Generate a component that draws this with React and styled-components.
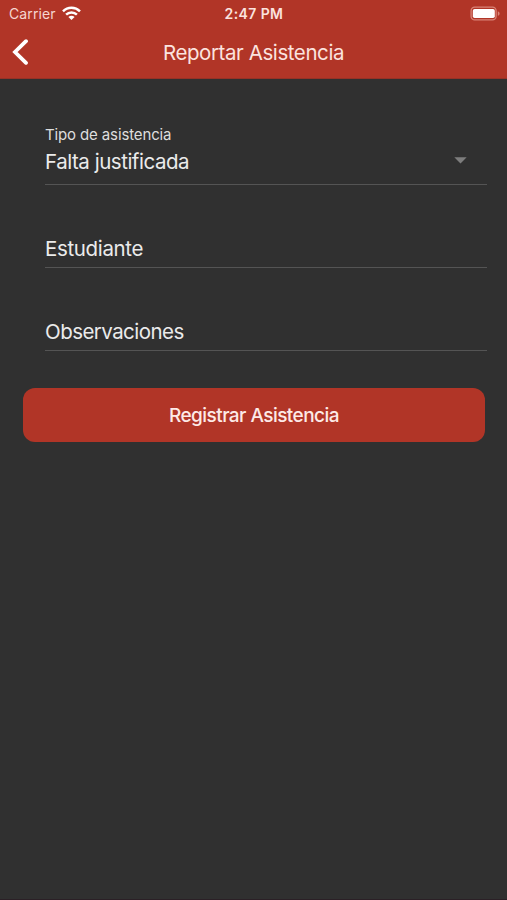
import { useState } from "react";
import styled, { createGlobalStyle } from "styled-components";

const GlobalStyle = createGlobalStyle`
  * {
    box-sizing: border-box;
  }
  body {
    margin: 0;
    background: #303030;
    font-family: Inter, "Liberation Sans", sans-serif;
  }
`;

const Screen = styled.div`
  width: 100%;
  height: 100vh;
  display: flex;
  flex-direction: column;
  background: #303030;
  border-bottom: 1px solid #2b2026;
  overflow: hidden;
`;

const Header = styled.header`
  height: 79px;
  background: #b13527;
  border-bottom: 1px solid #963226;
`;

const StatusBar = styled.div`
  display: grid;
  grid-template-columns: 1fr auto 1fr;
  align-items: center;
  height: 27px;
  padding: 0 6px 0 9px;
`;

const Carrier = styled.div`
  display: flex;
  align-items: center;
  gap: 6px;
  color: #f6d5d0;
  font-size: 14px;
  letter-spacing: 0.1px;
`;

const Clock = styled.span`
  margin-right: 2px;
  color: #fbe3df;
  font-size: 14px;
  font-weight: 600;
  letter-spacing: 0.4px;
`;

const Battery = styled.svg`
  justify-self: end;
`;

const NavBar = styled.nav`
  display: grid;
  grid-template-columns: 40px 1fr 40px;
  align-items: center;
  height: 50px;
`;

const BackButton = styled.button`
  display: flex;
  height: 40px;
  padding: 0 0 0 12px;
  align-items: center;
  border: none;
  background: none;
  cursor: pointer;
`;

const Title = styled.h1`
  margin: 0;
  color: #fbe3df;
  font-size: 20.5px;
  font-weight: 400;
  letter-spacing: -0.42px;
  text-align: center;
`;

const Form = styled.form`
  display: flex;
  flex-direction: column;
  padding: 0 20px 0 45px;
`;

const Field = styled.div`
  display: flex;
  flex-direction: column;
  justify-content: flex-end;
  height: ${(props) => props.$height}px;
  padding-bottom: ${(props) => props.$bottom}px;
  border-bottom: 1px solid #545454;
`;

const Label = styled.span`
  margin-bottom: 4px;
  color: #dedede;
  font-size: 15px;
  line-height: 20px;
  letter-spacing: -0.13px;
`;

const Value = styled.div`
  display: flex;
  align-items: center;
  justify-content: space-between;
  color: #ebebeb;
  font-size: 20.5px;
  line-height: 26px;
  letter-spacing: ${(props) => props.$spacing || "-0.55px"};
`;

const Arrow = styled.svg`
  margin: 0 20px 3px 0;
`;

const SubmitButton = styled.button`
  height: 54px;
  margin: 37px 2px 0 -22px;
  border: none;
  border-radius: 12px;
  background: #b13527;
  color: #fdeae7;
  font-family: inherit;
  font-size: 19px;
  font-weight: 500;
  letter-spacing: -0.55px;
  cursor: pointer;
`;

function WifiIcon() {
  return (
    <svg width="19" height="15" viewBox="0 0 19 15" fill="none" stroke="#fff" strokeWidth="2.5">
      <path d="M1 5.3C5.7 .7 13.3 .7 18 5.3" />
      <path d="M4.1 8.6C7.1 5.7 11.9 5.7 14.9 8.6" />
      <path d="M9.5 14L6.4 10.9C8.2 9.3 10.8 9.3 12.6 10.9Z" fill="#fff" stroke="none" />
    </svg>
  );
}

function BatteryIcon() {
  return (
    <Battery width="31" height="15" viewBox="0 0 31 15">
      <rect x="1.1" y="1.1" width="25" height="12.8" rx="3.6" fill="none" stroke="#d98478" strokeWidth="1.3" />
      <rect x="2.8" y="3" width="22" height="9" rx="1.8" fill="#fff" />
      <path d="M27.8 5.2C30.2 6 30.2 9 27.8 9.8Z" fill="#d98478" />
    </Battery>
  );
}

function App() {
  const [tipo] = useState("Falta justificada");

  return (
    <Screen>
      <GlobalStyle />
      <Header>
        <StatusBar>
          <Carrier>
            Carrier
            <WifiIcon />
          </Carrier>
          <Clock>2:47 PM</Clock>
          <BatteryIcon />
        </StatusBar>
        <NavBar>
          <BackButton type="button" aria-label="Volver">
            <svg width="17" height="26" viewBox="0 0 17 26" fill="none">
              <path d="M14 2.2L3 13L14 23.8" stroke="#fff" strokeWidth="3.8" strokeLinecap="round" />
            </svg>
          </BackButton>
          <Title>Reportar Asistencia</Title>
        </NavBar>
      </Header>

      <Form>
        <Field $height={106} $bottom={9}>
          <Label>Tipo de asistencia</Label>
          <Value $spacing="-0.47px">
            {tipo}
            <Arrow width="13" height="7" viewBox="0 0 13 7">
              <path d="M.3 .3H12.7L6.5 6.5Z" fill="#7d7d7d" />
            </Arrow>
          </Value>
        </Field>
        <Field $height={83} $bottom={5}>
          <Value $spacing="-0.35px">Estudiante</Value>
        </Field>
        <Field $height={83} $bottom={5}>
          <Value>Observaciones</Value>
        </Field>
        <SubmitButton type="button">Registrar Asistencia</SubmitButton>
      </Form>
    </Screen>
  );
}

export default App;
